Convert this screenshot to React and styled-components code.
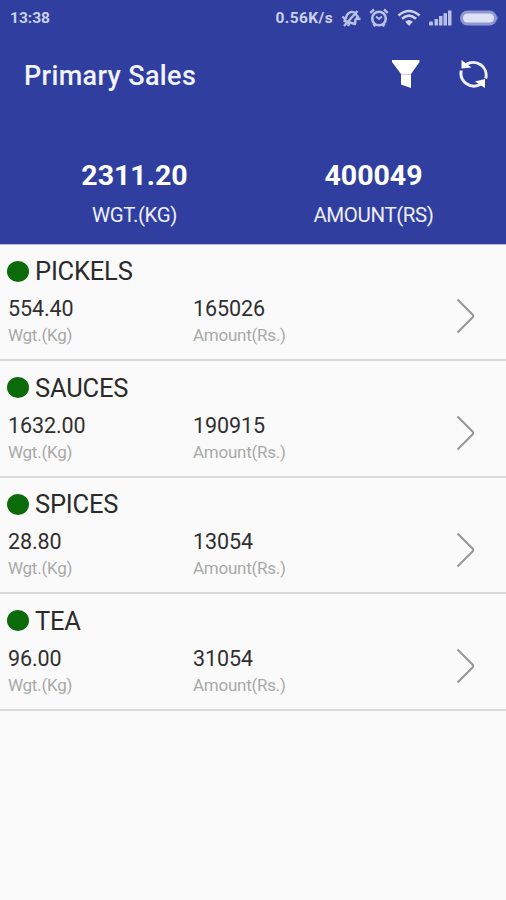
import React from "react";
import styled, { createGlobalStyle } from "styled-components";

const GlobalStyle = createGlobalStyle`
  body {
    margin: 0;
    background: #fafafa;
    font-family: Roboto, "Liberation Sans", sans-serif;
  }
`;

const Screen = styled.div`
  min-height: 900px;
  background: #fafafa;
  overflow: hidden;
`;

const Header = styled.header`
  height: 244.6px;
  background: #303f9f;
  border-bottom: 1px solid #b4b7d6;
  box-sizing: border-box;
  color: #fff;
`;

const StatusBar = styled.div`
  display: flex;
  align-items: center;
  justify-content: space-between;
  height: 36px;
  padding: 0 8px 0 10px;
  color: #ccd1ef;
`;

const StatusText = styled.span`
  font-size: 15.5px;
  font-weight: 700;
  line-height: 36px;
  letter-spacing: ${(p) => p.$spacing || "0"};
`;

const StatusIcons = styled.div`
  display: flex;
  align-items: center;

  svg {
    display: block;
    margin-left: 8px;
  }
`;

const Toolbar = styled.div`
  display: flex;
  align-items: center;
  height: 78px;
  padding: 0 16px 0 24px;
`;

const Title = styled.h1`
  flex: 1;
  margin: 0;
  padding-top: 2px;
  font-size: 27px;
  font-weight: 500;
  line-height: 32px;
  letter-spacing: 0.35px;
  color: #f1f3ff;
`;

const IconButton = styled.button`
  display: flex;
  padding: 0;
  border: 0;
  margin-left: ${(p) => p.$left || "0"};
  background: transparent;
  cursor: pointer;
`;

const Summary = styled.div`
  display: flex;
  padding: 44px 13px 0 15px;
`;

const Total = styled.div`
  flex: 1;
  text-align: center;
`;

const TotalValue = styled.div`
  font-size: 28.5px;
  font-weight: 700;
  line-height: 36px;
`;

const TotalLabel = styled.div`
  margin-top: 7px;
  font-size: 20.5px;
  line-height: 28px;
  letter-spacing: -0.4px;
  color: #eceeff;
`;

const List = styled.ul`
  margin: 0;
  padding: 0;
  list-style: none;
`;

const Row = styled.li`
  display: flex;
  align-items: center;
  box-sizing: border-box;
  height: 116.6px;
  padding: 0 31px 0 8px;
  border-bottom: 2px solid #d9d9d9;

  > svg {
    margin-top: 29px;
  }
`;

const RowBody = styled.div`
  flex: 1;
  align-self: flex-start;
  padding-top: 10.6px;
`;

const Name = styled.div`
  display: flex;
  align-items: center;
  height: 32px;
  font-size: 25.5px;
  letter-spacing: -0.2px;
  color: #2b2b2b;
`;

const Dot = styled.span`
  width: 22px;
  height: 21px;
  margin: 0 6px 0 -1px;
  border-radius: 50%;
  background: #0b6b0b;
`;

const Figures = styled.div`
  display: grid;
  grid-template-columns: 185px 1fr;
  padding-top: 9px;
`;

const Value = styled.div`
  font-size: 21.5px;
  line-height: 26px;
  letter-spacing: -0.1px;
  color: #303030;
`;

const Unit = styled.div`
  font-size: 17px;
  line-height: 26px;
  letter-spacing: -0.25px;
  color: #a9a9a9;
`;

const MutedIcon = () => (
  <svg width="20" height="20" viewBox="0 0 20 20" fill="none" stroke="#b9c0e8">
    <path
      d="M3.500 13L6 7Q9 2.500 13.500 4.500L17 9L14.500 11.500L14 16Z"
      strokeWidth="2.400"
      strokeLinejoin="round"
    />
    <path d="M1.500 8.500L4 11M8.500 15L7 18M15 10.500L19.500 11" strokeWidth="2.400" />
    <path d="M3 18L16.500 3" strokeWidth="2.400" />
  </svg>
);

const AlarmIcon = () => (
  <svg width="20" height="20" viewBox="0 0 20 20" fill="none" stroke="#b9c0e8">
    <circle cx="10" cy="10.500" r="6.800" strokeWidth="2.600" />
    <path d="M1.200 4.800L5 1.500M18.800 4.800L15 1.500" strokeWidth="2.400" />
    <path d="M4.500 15.500L6 18.500M15.500 15.500L14 18.500" strokeWidth="2.200" />
    <path d="M7 8.500L10 11L13 8.500" strokeWidth="1.800" />
  </svg>
);

const WifiIcon = () => (
  <svg width="24" height="18" viewBox="0 0 24 18" fill="none" stroke="#ccd1ef">
    <path d="M1.500 6.500Q12 -2.500 22.500 6.500" strokeWidth="2.600" />
    <path d="M5 9.800Q12 3.500 19 9.800" strokeWidth="2.600" />
    <path d="M8.200 12.800Q12 9.200 15.800 12.800L12 17Z" fill="#ccd1ef" stroke="none" />
  </svg>
);

const SignalIcon = () => (
  <svg width="23" height="16" viewBox="0 0 23 16" fill="#b9c0e8">
    <rect x="0" y="11.500" width="4" height="4" rx="1" />
    <rect x="5.500" y="9" width="3.500" height="6.500" />
    <rect x="10" y="6" width="3.500" height="9.500" />
    <rect x="14.500" y="3.200" width="3.500" height="12.300" />
    <rect x="19" y="0.500" width="3.500" height="15" />
  </svg>
);

const BatteryIcon = () => (
  <svg width="38" height="16" viewBox="0 0 38 16">
    <rect x="0" y="0.500" width="37" height="15" rx="7.500" fill="#8e98d3" />
    <rect x="3" y="3.500" width="31" height="9" rx="4.500" fill="#dfe2f5" />
    <path d="M36.500 5.500Q39 8 36.500 10.500Z" fill="#8e98d3" />
  </svg>
);

const FilterIcon = () => (
  <svg width="28" height="30" viewBox="0 0 28 30" fill="#fff">
    <path d="M0 0H27.500V2L19 14H9L0 2Z" />
    <path d="M9 15H19V28L9 24.500Z" />
    <path d="M9 14H19V15H9Z" fill="#c9cde6" />
  </svg>
);

const SyncIcon = () => (
  <svg width="32" height="30" viewBox="0 0 32 30" fill="none">
    <path
      d="M8 4.500A13 12.800 0 0 1 27.700 18.500M23 24A13 12.800 0 0 1 3.300 10.500"
      stroke="#edf0ff"
      strokeWidth="3"
    />
    <path d="M3.500 0V8.500L13.500 7.500Z" fill="#fff" />
    <path d="M27 28V19L17 21.500Z" fill="#fff" />
  </svg>
);

const ChevronIcon = () => (
  <svg width="20" height="36" viewBox="0 0 20 36" fill="none">
    <path
      d="M2.500 1.500L17.500 16.500Q18.800 18 17.500 19.500L2.500 34.500"
      stroke="#969696"
      strokeWidth="2"
    />
  </svg>
);

const products = [
  { name: "PICKELS", weight: "554.40", amount: "165026" },
  { name: "SAUCES", weight: "1632.00", amount: "190915" },
  { name: "SPICES", weight: "28.80", amount: "13054" },
  { name: "TEA", weight: "96.00", amount: "31054" },
];

function ProductRow({ name, weight, amount }) {
  return (
    <Row>
      <RowBody>
        <Name>
          <Dot />
          {name}
        </Name>
        <Figures>
          <div>
            <Value>{weight}</Value>
            <Unit>Wgt.(Kg)</Unit>
          </div>
          <div>
            <Value>{amount}</Value>
            <Unit>Amount(Rs.)</Unit>
          </div>
        </Figures>
      </RowBody>
      <ChevronIcon />
    </Row>
  );
}

export default function App() {
  return (
    <>
      <GlobalStyle />
      <Screen>
        <Header>
          <StatusBar>
            <StatusText>13:38</StatusText>
            <StatusIcons>
              <StatusText $spacing="0.4px">0.56K/s</StatusText>
              <MutedIcon />
              <AlarmIcon />
              <WifiIcon />
              <SignalIcon />
              <BatteryIcon />
            </StatusIcons>
          </StatusBar>
          <Toolbar>
            <Title>Primary Sales</Title>
            <IconButton aria-label="Filter">
              <FilterIcon />
            </IconButton>
            <IconButton aria-label="Refresh" $left="38px">
              <SyncIcon />
            </IconButton>
          </Toolbar>
          <Summary>
            <Total>
              <TotalValue>2311.20</TotalValue>
              <TotalLabel>WGT.(KG)</TotalLabel>
            </Total>
            <Total>
              <TotalValue>400049</TotalValue>
              <TotalLabel>AMOUNT(RS)</TotalLabel>
            </Total>
          </Summary>
        </Header>
        <List>
          {products.map((p) => (
            <ProductRow key={p.name} {...p} />
          ))}
        </List>
      </Screen>
    </>
  );
}
